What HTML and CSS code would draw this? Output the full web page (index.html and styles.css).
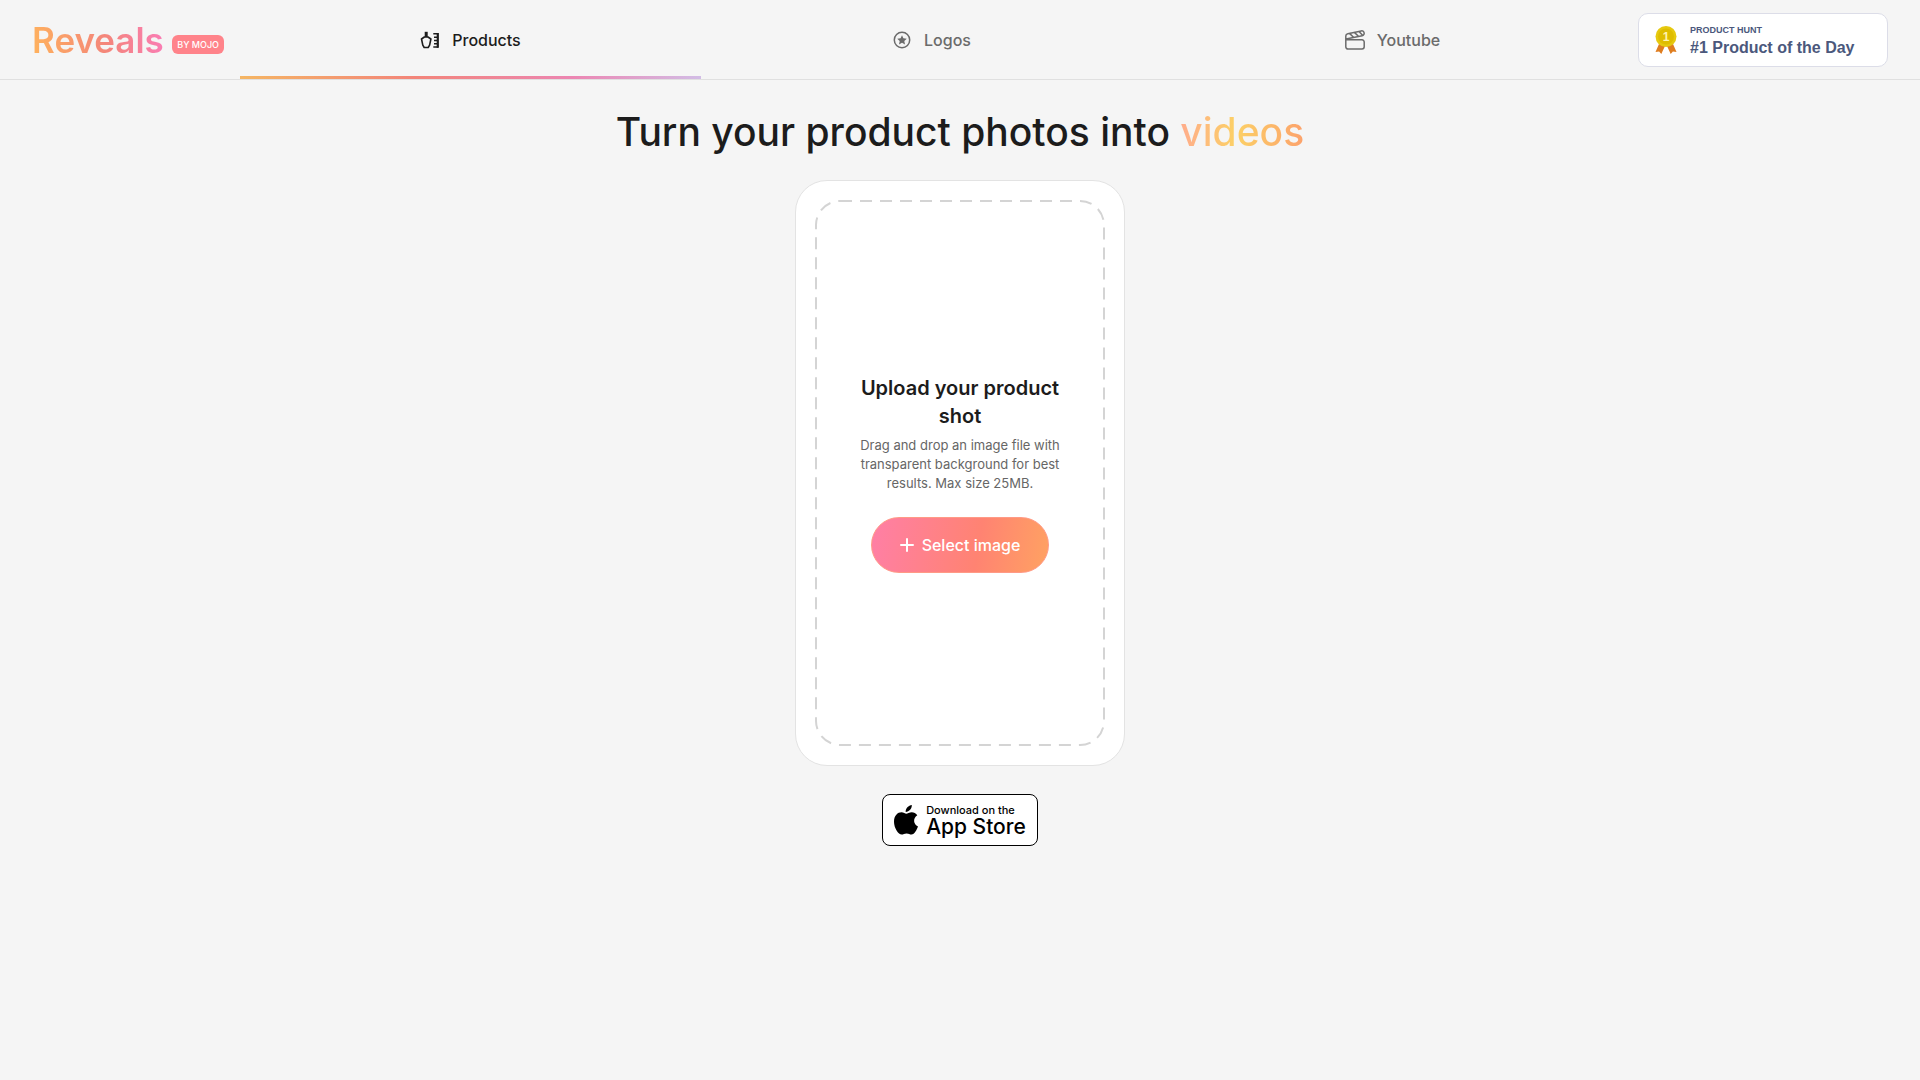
FILE: index.html
```html
<!DOCTYPE html>
<html lang="en">
<head>
<meta charset="utf-8">
<meta name="viewport" content="width=device-width, initial-scale=1">
<title>Reveals by Mojo</title>
<link rel="stylesheet" href="styles.css">
</head>
<body>
<header class="header">
  <a class="brand" href="#">
    <span class="brand-name">Reveals</span>
    <span class="brand-tag">BY MOJO</span>
  </a>
  <nav class="tabs">
    <a class="tab tab-active" href="#products">
      <svg class="tab-icon" viewBox="0 0 20 20" fill="none" stroke="currentColor" stroke-width="1.600" stroke-linejoin="round" aria-hidden="true">
        <path d="M4.700 1.800h3v5.200h-3z" fill="currentColor" stroke="none"/>
        <path d="M4.400 7 1.500 9l1.300 6.200 1.400 2.300h4l1.400-2.300L10.900 9 8 7z"/>
        <path d="M13.300 3.800H18M14 7.200h4M14 10.500h4M14 13.800h4M13.300 17H18"/>
        <path d="M17.800 3v14.800" stroke-width="2.200"/>
      </svg>
      <span>Products</span>
    </a>
    <a class="tab" href="#logos">
      <svg class="tab-icon" viewBox="0 0 20 20" fill="none" stroke="currentColor" stroke-width="1.500" aria-hidden="true">
        <circle cx="10" cy="10" r="7.700"/>
        <path d="m10 5.200 1.400 3.100 3.400.4-2.500 2.300.7 3.400-3-1.700-3 1.700.7-3.400-2.500-2.300 3.400-.4z" fill="currentColor" stroke="none"/>
      </svg>
      <span>Logos</span>
    </a>
    <a class="tab" href="#youtube">
      <svg class="tab-icon" viewBox="0 0 20 20" fill="none" stroke="currentColor" stroke-width="1.500" stroke-linejoin="round" aria-hidden="true">
        <path d="M.8 9.800H17a2.200 2.200 0 0 1 2.200 2.200v4.800A2.200 2.200 0 0 1 17 19H3a2.200 2.200 0 0 1-2.200-2.200V6.200A2.500 2.500 0 0 1 2.800 3.700L16.200.9a2.400 2.400 0 0 1 2.900 1.900 2.400 2.400 0 0 1-1.900 2.900L.9 9"/>
        <path d="m4.500 3.400 4 3.900M9.400 2.400l4 3.900M14 1.400l3.800 4"/>
      </svg>
      <span>Youtube</span>
    </a>
  </nav>
  <a class="award" href="#product-hunt">
    <svg class="award-medal" viewBox="0 0 22 28" aria-hidden="true">
      <path d="M4 18 .5 26l3.600-.6L6.300 28 10 20zM18 18l3.500 8-3.600-.6L15.700 28 12 20z" fill="#df7d1f"/>
      <circle cx="11" cy="10.500" r="10.500" fill="#e6c90f"/>
      <circle cx="11" cy="10.500" r="8" fill="#dfbd00"/>
      <text class="award-rank" x="11" y="15" text-anchor="middle">1</text>
    </svg>
    <span class="award-text">
      <span class="award-source">PRODUCT HUNT</span>
      <span class="award-title">#1 Product of the Day</span>
    </span>
  </a>
</header>
<main class="main">
  <h1 class="headline">Turn your product photos into <span class="headline-accent">videos</span></h1>
  <section class="card">
    <div class="dropzone">
      <svg class="dropzone-outline" aria-hidden="true"><rect class="dropzone-rect" x="1" y="1" rx="24"/></svg>
      <h2 class="dropzone-title">Upload your product shot</h2>
      <p class="dropzone-hint">Drag and drop an image file with transparent background for best results. Max size 25MB.</p>
      <button class="select" type="button">
        <svg class="select-icon" viewBox="0 0 14 14" fill="none" stroke="currentColor" stroke-width="2" stroke-linecap="round" aria-hidden="true"><path d="M7 1v12M1 7h12"/></svg>
        <span>Select image</span>
      </button>
    </div>
  </section>
  <a class="store" href="#app-store">
    <svg class="store-logo" viewBox="0 0 24 30" aria-hidden="true">
      <path d="M17.800 0c.3 3.400-2.700 6.900-6.100 6.900C11.300 3.600 14.600.3 17.800 0z"/>
      <path d="M12.300 8.700c1.200 0 3-1.500 5.500-1.500 2 0 4.200 1 5.500 3-4.700 2.700-3.900 9.400.7 11.200-.9 2.500-3.500 8.100-6.500 8.100-1.800 0-2.600-1.100-4.900-1.100s-3.200 1.100-4.900 1.100C4.300 29.500 0 23 0 16.700 0 10.600 3.800 7.300 7.400 7.300c2.200 0 3.800 1.400 4.900 1.400z"/>
    </svg>
    <span class="store-text">
      <span class="store-lead">Download on the</span>
      <span class="store-name">App Store</span>
    </span>
  </a>
</main>
</body>
</html>
```
FILE: styles.css
```css
* {
  box-sizing: border-box;
}

body {
  margin: 0;
  min-height: 100vh;
  background: #f5f5f5;
  color: #1c1c1c;
  font-family: Inter, "Liberation Sans", sans-serif;
}

a {
  color: inherit;
  text-decoration: none;
}

.header {
  display: flex;
  align-items: center;
  min-height: 80px;
  padding: 0 32px;
  border-bottom: 1px solid #e0e0e0;
}

.brand {
  display: flex;
  flex: none;
  align-items: flex-end;
  justify-content: space-between;
  width: 192px;
  margin-right: 16px;
}

.brand-name {
  background: linear-gradient(80deg, #ffb35c, #f4867a 55%, #fa7cb8);
  background-clip: text;
  color: transparent;
  font-size: 35px;
  font-weight: 600;
  line-height: 40px;
}

.brand-tag {
  padding: 0 5px;
  margin: 0 0 6px;
  border-radius: 6px;
  background: #ff838a;
  color: #fff;
  font-size: 9px;
  font-weight: 500;
  line-height: 19px;
}

.tabs {
  display: flex;
  flex: 1;
  align-self: stretch;
}

.tab {
  display: flex;
  flex: 1;
  align-items: center;
  justify-content: center;
  gap: 12px;
  padding-top: 3px;
  border-bottom: 3px solid transparent;
  color: #6b6b6b;
  font-size: 16px;
  font-weight: 500;
}

.tab-active {
  border-image: linear-gradient(90deg, #f5b663, #f3857a 38%, #ec86b2 72%, #d2bde6) 1;
  color: #1c1c1c;
}

.tab-icon {
  width: 20px;
  height: 20px;
}

.award {
  display: flex;
  flex: none;
  align-items: center;
  gap: 13px;
  width: 250px;
  height: 54px;
  margin-left: 15px;
  padding: 0 16px;
  border: 1px solid #dcdde8;
  border-radius: 10px;
  background: #fff;
  color: #4b587c;
  font-family: "Liberation Sans", sans-serif;
  font-weight: 700;
}

.award-medal {
  width: 22px;
  height: 28px;
}

.award-rank {
  fill: #fff3b0;
  font-size: 12px;
}

.award-text {
  display: flex;
  flex-direction: column;
}

.award-source {
  font-size: 9px;
  line-height: 16px;
}

.award-title {
  font-size: 16px;
  line-height: 20px;
}

.main {
  display: flex;
  flex-direction: column;
  align-items: center;
  padding: 28px 16px;
}

.headline {
  margin: 0 0 24px;
  font-size: 39px;
  font-weight: 500;
  line-height: 48px;
  text-align: center;
}

.headline-accent {
  background: linear-gradient(90deg, #ffac8c, #fcd066 45%, #fca26c);
  background-clip: text;
  color: transparent;
}

.card {
  display: flex;
  width: 330px;
  min-height: 586px;
  padding: 19px;
  border: 1px solid #e3e3e3;
  border-radius: 32px;
  background: #fff;
}

.dropzone {
  position: relative;
  display: flex;
  flex: 1;
  flex-direction: column;
  align-items: center;
  justify-content: center;
  padding: 0 44px;
  text-align: center;
}

.dropzone-outline {
  position: absolute;
  inset: 0;
  width: 100%;
  height: 100%;
}

.dropzone-rect {
  width: calc(100% - 2px);
  height: calc(100% - 2px);
  fill: none;
  stroke: #d4d4d4;
  stroke-width: 2px;
  stroke-dasharray: 12 8;
}

.dropzone-title {
  margin: 0 0 6px;
  font-size: 20px;
  font-weight: 600;
  line-height: 28px;
}

.dropzone-hint {
  margin: 0 0 24px;
  color: #666;
  font-size: 13px;
  line-height: 19px;
}

.select {
  position: relative;
  display: flex;
  align-items: center;
  gap: 8px;
  height: 56px;
  padding: 0 28px;
  border: 1px solid #ff9a86;
  border-radius: 28px;
  background: linear-gradient(100deg, #ff7fa6, #ff8372 60%, #ffa262);
  color: #fff;
  font: 500 16px/24px Inter, "Liberation Sans", sans-serif;
}

.select-icon {
  width: 14px;
  height: 14px;
}

.store {
  display: flex;
  align-items: center;
  gap: 8px;
  height: 52px;
  margin-top: 28px;
  padding: 0 11px;
  border: 1px solid #000;
  border-radius: 8px;
  background: #fff;
  color: #000;
}

.store-logo {
  width: 24px;
  height: 30px;
}

.store-text {
  display: flex;
  flex-direction: column;
}

.store-lead {
  font-size: 11px;
  font-weight: 500;
  line-height: 14px;
}

.store-name {
  font-size: 21px;
  font-weight: 500;
  line-height: 20px;
}
```
